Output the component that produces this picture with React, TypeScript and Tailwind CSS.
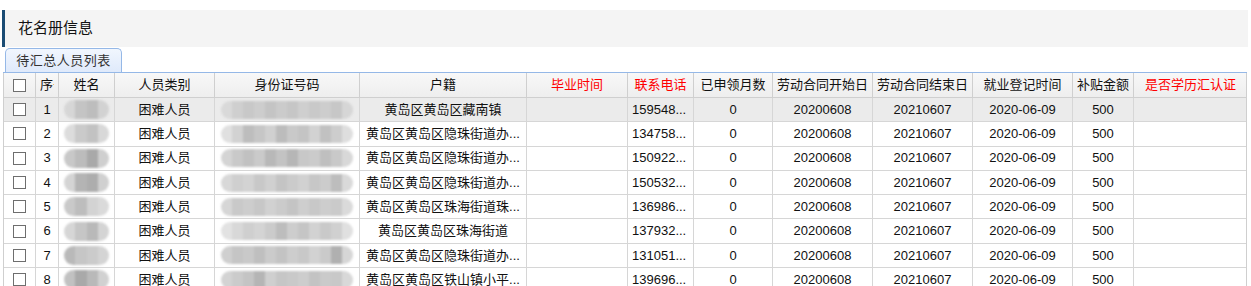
import React from "react";

type Col = { key: string; title: string; w: number; red?: boolean; align?: "left" | "center" };

const cols: Col[] = [
  { key: "cb", title: "", w: 32 },
  { key: "no", title: "序号", w: 23 },
  { key: "name", title: "姓名", w: 56 },
  { key: "type", title: "人员类别", w: 100 },
  { key: "id", title: "身份证号码", w: 145 },
  { key: "hj", title: "户籍", w: 167 },
  { key: "by", title: "毕业时间", w: 101, red: true },
  { key: "tel", title: "联系电话", w: 66, red: true, align: "left" },
  { key: "ysl", title: "已申领月数", w: 79 },
  { key: "start", title: "劳动合同开始日期", w: 100 },
  { key: "end", title: "劳动合同结束日期", w: 100 },
  { key: "jy", title: "就业登记时间", w: 100 },
  { key: "bt", title: "补贴金额", w: 61 },
  { key: "rz", title: "是否学历汇认证", w: 113, red: true },
];

const rows = [
  { hj: "黄岛区黄岛区藏南镇", tel: "159548..." },
  { hj: "黄岛区黄岛区隐珠街道办...", tel: "134758..." },
  { hj: "黄岛区黄岛区隐珠街道办...", tel: "150922..." },
  { hj: "黄岛区黄岛区隐珠街道办...", tel: "150532..." },
  { hj: "黄岛区黄岛区珠海街道珠...", tel: "136986..." },
  { hj: "黄岛区黄岛区珠海街道", tel: "137932..." },
  { hj: "黄岛区黄岛区隐珠街道办...", tel: "131051..." },
  { hj: "黄岛区黄岛区铁山镇小平...", tel: "139696..." },
];

const nameShades = [
  ["#d6d6d6", "#c4c4c4", "#bdbdbd", "#d2d2d2"],
  ["#dcdcdc", "#cacaca", "#c2c2c2", "#d8d8d8"],
  ["#c8c8c8", "#bcbcbc", "#a9a9a9", "#cfcfcf"],
  ["#d4d4d4", "#b4b4b4", "#adadad", "#d0d0d0"],
  ["#c9c9c9", "#bdbdbd", "#d3d3d3", "#dadada"],
  ["#d6d6d6", "#c6c6c6", "#b9b9b9", "#d4d4d4"],
  ["#b9b9b9", "#c6c6c6", "#cbcbcb", "#d4d4d4"],
  ["#c1c1c1", "#a9a9a9", "#b9b9b9", "#d1d1d1"],
];

const idShades = [
  ["#d9d9d9", "#cfcfcf", "#c8c8c8", "#cdcdcd", "#c4c4c4", "#cbcbcb", "#c6c6c6", "#cfcfcf", "#c9c9c9", "#cdcdcd", "#c7c7c7", "#d6d6d6"],
  ["#e0e0e0", "#d2d2d2", "#bdbdbd", "#c6c6c6", "#d0d0d0", "#bcbcbc", "#c9c9c9", "#c4c4c4", "#d2d2d2", "#c1c1c1", "#cdcdcd", "#dedede"],
  ["#d4d4d4", "#c9c9c9", "#c1c1c1", "#cacaca", "#b8b8b8", "#c3c3c3", "#b6b6b6", "#c8c8c8", "#cbcbcb", "#bfbfbf", "#c9c9c9", "#d8d8d8"],
  ["#d8d8d8", "#cfcfcf", "#d3d3d3", "#c8c8c8", "#d0d0d0", "#c4c4c4", "#cbcbcb", "#d1d1d1", "#c7c7c7", "#cccccc", "#bdbdbd", "#d9d9d9"],
  ["#d6d6d6", "#c9c9c9", "#cdcdcd", "#c7c7c7", "#d1d1d1", "#cbcbcb", "#c4c4c4", "#cecece", "#c8c8c8", "#cdcdcd", "#cacaca", "#dadada"],
  ["#e2e2e2", "#d8d8d8", "#cfcfcf", "#d4d4d4", "#cbcbcb", "#bdbdbd", "#cdcdcd", "#c5c5c5", "#d2d2d2", "#c9c9c9", "#d0d0d0", "#e0e0e0"],
  ["#cfcfcf", "#c5c5c5", "#c9c9c9", "#bfbfbf", "#cbcbcb", "#c3c3c3", "#cdcdcd", "#c8c8c8", "#d2d2d2", "#cacaca", "#b0b0b0", "#d6d6d6"],
  ["#d3d3d3", "#cbcbcb", "#c4c4c4", "#b5b5b5", "#cfcfcf", "#c6c6c6", "#c9c9c9", "#cdcdcd", "#c3c3c3", "#cacaca", "#c8c8c8", "#d8d8d8"],
];

function Blob({ shades, w, h }: { shades: string[]; w: number; h: number }) {
  return (
    <div
      className="flex overflow-hidden rounded-full blur-[1px]"
      style={{ width: w, height: h }}
    >
      {shades.map((c, i) => (
        <div key={i} className="h-full flex-1" style={{ backgroundColor: c }} />
      ))}
    </div>
  );
}

function Checkbox() {
  return <div className="h-[13px] w-[13px] border border-[#6e6e6e] bg-white" />;
}

export default function App() {
  return (
    <div
      className="h-[286px] w-[1251px] overflow-hidden bg-white pt-[10px] text-[#111]"
      style={{ fontFamily: '"Liberation Sans", "Noto Sans CJK SC", sans-serif' }}
    >
      <div className="ml-[2px] flex h-[37px] w-[1246px] items-center border-l-[3px] border-[#1b4c74] bg-[#f4f4f4] pl-[13px] text-[15px] text-[#111]">
        花名册信息
      </div>
      <div className="ml-[3px] mt-[1px] flex h-[25px] w-[1244px] items-end border-b border-[#95b8e7]">
        <div className="ml-[2px] flex h-[24px] w-[117px] items-center justify-center rounded-t-[5px] border border-b-0 border-[#95b8e7] bg-gradient-to-b from-[#f1f6fe] to-[#dfeafb] text-[13px] tracking-[0.5px] text-[#333]">
          待汇总人员列表
        </div>
      </div>
      <div className="ml-[3px] w-[1244px] border-x border-[#cfcfcf]">
        <div className="flex h-[25px] border-b border-[#cfcfcf] bg-gradient-to-b from-[#f8f8f8] to-[#eeeeee]">
          {cols.map((c) => (
            <div
              key={c.key}
              className={`flex shrink-0 items-center overflow-hidden border-r border-[#cfcfcf] px-[4px] text-[13px] ${
                c.red ? "text-[#ff0000]" : "text-[#111]"
              } ${c.key === "cb" ? "justify-center" : ""} ${c.key === "rz" ? "border-r-0" : ""}`}
              style={{ width: c.w }}
            >
              {c.key === "cb" ? (
                <Checkbox />
              ) : (
                <div className="w-full overflow-hidden whitespace-nowrap text-center">{c.title}</div>
              )}
            </div>
          ))}
        </div>
        {rows.map((r, i) => (
          <div
            key={i}
            className={`flex h-[24.3px] border-b border-[#d6d6d6] text-[13px] text-[#111] ${i === 0 ? "bg-[#ebebeb]" : "bg-white"}`}
          >
            {cols.map((c) => {
              let content: React.ReactNode = null;
              switch (c.key) {
                case "cb":
                  content = <Checkbox />;
                  break;
                case "no":
                  content = String(i + 1);
                  break;
                case "name":
                  content = <Blob shades={nameShades[i]} w={45} h={19} />;
                  break;
                case "type":
                  content = "困难人员";
                  break;
                case "id":
                  content = <Blob shades={idShades[i]} w={132} h={18} />;
                  break;
                case "hj":
                  content = r.hj;
                  break;
                case "tel":
                  content = r.tel;
                  break;
                case "ysl":
                  content = "0";
                  break;
                case "start":
                  content = "20200608";
                  break;
                case "end":
                  content = "20210607";
                  break;
                case "jy":
                  content = "2020-06-09";
                  break;
                case "bt":
                  content = "500";
                  break;
                default:
                  content = null;
              }
              return (
                <div
                  key={c.key}
                  className={`flex shrink-0 items-center overflow-hidden whitespace-nowrap border-r border-[#d6d6d6] ${
                    c.align === "left" ? "justify-start pl-[4px]" : "justify-center"
                  } ${c.key === "rz" ? "border-r-0" : ""}`}
                  style={{ width: c.w }}
                >
                  {content}
                </div>
              );
            })}
          </div>
        ))}
      </div>
    </div>
  );
}
